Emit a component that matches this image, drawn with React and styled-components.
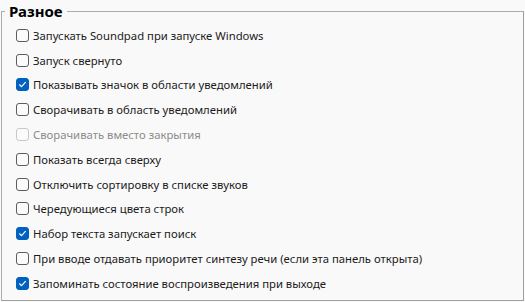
import React, { useState } from "react";
import styled, { createGlobalStyle } from "styled-components";

const Global = createGlobalStyle`
  html, body {
    margin: 0;
    padding: 0;
    background: #f9f9f9;
  }
  body {
    font-family: "Noto Sans", "Open Sans", sans-serif;
    color: #1b1b1b;
  }
`;

const Group = styled.section`
  box-sizing: border-box;
  margin: 11px 1px 0 1px;
  width: 523px;
  height: 290px;
  border: 1px solid #adadad;
  border-right-color: #a0a0a0;
  border-bottom-color: #a0a0a0;
`;

const Legend = styled.h2`
  margin: -10px 0 0 3px;
  padding: 0 4px;
  width: fit-content;
  background: #f9f9f9;
  font-size: 15px;
  line-height: 18px;
  font-weight: 700;
  color: #000;
`;

const List = styled.div`
  display: flex;
  flex-direction: column;
  padding: 3px 0 0 14px;
`;

const Row = styled.label`
  display: flex;
  align-items: center;
  gap: 4px;
  height: 24.8px;
  font-size: 11.3px;
  color: ${(p) => (p.disabled ? "#8c8c8c" : "#1b1b1b")};
  cursor: ${(p) => (p.disabled ? "default" : "pointer")};
  user-select: none;
`;

const Box = styled.span`
  box-sizing: border-box;
  width: 13px;
  height: 13px;
  flex: none;
  border-radius: 3px;
  display: flex;
  align-items: center;
  justify-content: center;
  background: ${(p) => (p.checked ? "#0062be" : "#fbfbfb")};
  border: 1px solid
    ${(p) => (p.checked ? "#0062be" : p.disabled ? "#c9c9c9" : "#5c5c5c")};
`;

const Check = () => (
  <svg width="9" height="9" viewBox="0 0 9 9">
    <path
      d="M1.6 4.8 L3.6 6.7 L7.4 2.4"
      fill="none"
      stroke="#fff"
      strokeWidth="1.2"
      strokeLinecap="round"
      strokeLinejoin="round"
    />
  </svg>
);

const options = [
  { label: "Запускать Soundpad при запуске Windows", checked: false },
  { label: "Запуск свернуто", checked: false },
  { label: "Показывать значок в области уведомлений", checked: true },
  { label: "Сворачивать в область уведомлений", checked: false },
  { label: "Сворачивать вместо закрытия", checked: false, disabled: true },
  { label: "Показать всегда сверху", checked: false },
  { label: "Отключить сортировку в списке звуков", checked: false },
  { label: "Чередующиеся цвета строк", checked: false },
  { label: "Набор текста запускает поиск", checked: true },
  {
    label: "При вводе отдавать приоритет синтезу речи (если эта панель открыта)",
    checked: false,
  },
  { label: "Запоминать состояние воспроизведения при выходе", checked: true },
];

export default function App() {
  const [state, setState] = useState(options.map((o) => o.checked));

  const toggle = (i) => {
    if (options[i].disabled) return;
    setState((s) => s.map((v, j) => (j === i ? !v : v)));
  };

  return (
    <>
      <Global />
      <Group>
        <Legend>Разное</Legend>
        <List>
          {options.map((o, i) => (
            <Row key={i} disabled={o.disabled} onClick={() => toggle(i)}>
              <Box checked={state[i]} disabled={o.disabled}>
                {state[i] && <Check />}
              </Box>
              {o.label}
            </Row>
          ))}
        </List>
      </Group>
    </>
  );
}
